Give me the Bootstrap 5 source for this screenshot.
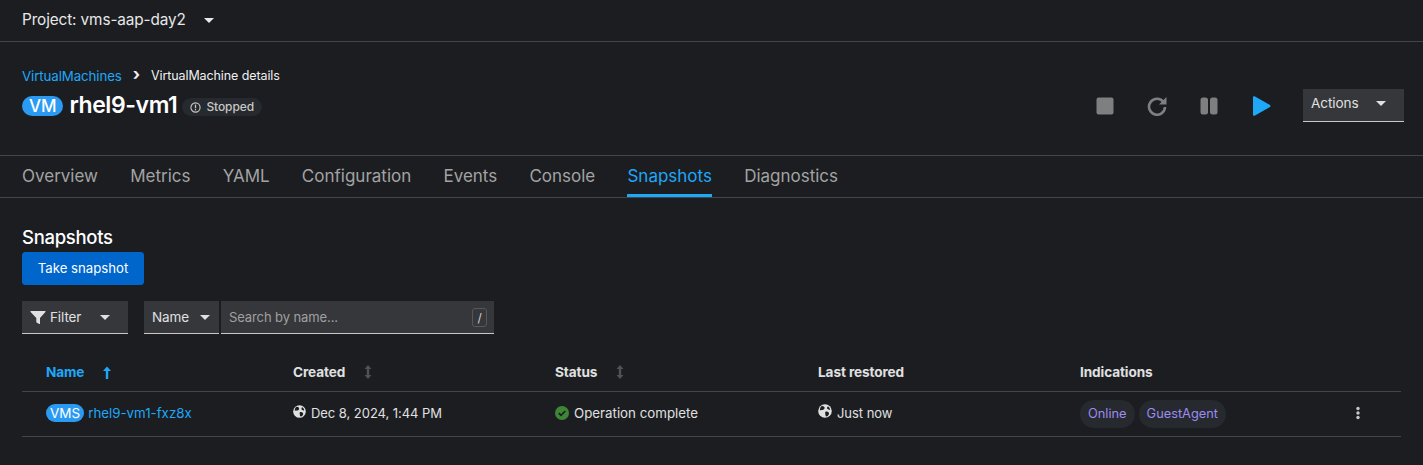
<!DOCTYPE html>
<html lang="en">
<head>
<meta charset="utf-8">
<title>rhel9-vm1 snapshots</title>
<link href="https://cdn.jsdelivr.net/npm/bootstrap@5.3.0/dist/css/bootstrap.min.css" rel="stylesheet">
<style>
html,body{height:465px;overflow:hidden}
body{background:#1b1d21;color:#e0e0e0;font-family:"Inter","Noto Sans",sans-serif;font-size:14px;letter-spacing:-.1px}
a{text-decoration:none}
.blue-t{color:#1fa7f8}
.top-strip{height:42px;border-bottom:1px solid #444548;padding:0 22px}
.proj{font-size:15.3px;color:#e8e8e8;gap:18px}
.caret{width:0;height:0;border-left:5px solid transparent;border-right:5px solid transparent;border-top:5px solid currentColor;display:inline-block}
.head-zone{height:113px;padding:25px 19px 0 22px}
.crumbs{font-size:12.5px;line-height:18px;gap:11px;color:#f0f0f0}
.crumbs a{font-size:13.3px}
.chev{font-size:17px;font-weight:700;line-height:1;margin-top:-3px}
.title-line{margin-top:6px;height:28px;gap:6px}
.vm-pill{background:#2b9af3;color:#fff;border-radius:12px;font-size:17px;font-weight:500;line-height:20px;padding:0 7px;margin-top:5px}
.vm-name{font-size:23px;font-weight:600;color:#fff;line-height:28px;letter-spacing:-.4px}
.stop-pill{background:#26292d;color:#c7c7c7;border-radius:12px;font-size:12px;font-weight:500;height:18px;padding:0 8px;gap:5px;margin-top:7px;margin-left:-1px}
.acts{margin-top:-12px;gap:32px}
.ic-btn{width:20px;height:20px;display:block;margin-top:2px}
.act-sel{background:#36373b;color:#e0e0e0;width:101px;height:33px;border-bottom:1px solid #c7c7c7;padding:0 18px 2px 8px;font-size:13.6px}
.tab-strip{height:43px;border-top:1px solid #444548;border-bottom:1px solid #444548;padding:0 22px;gap:32.2px}
.tab-item{font-size:17px;color:#a3a3a3;height:41px;line-height:41px;letter-spacing:0}
.tab-on{color:#1fa7f8;border-bottom:3px solid #1fa7f8}
.page-h{font-size:18.5px;font-weight:500;color:#fff;line-height:24px;margin:27px 0 0 22px;letter-spacing:-.3px}
.snap-btn{margin:3px 0 0 22px;background:#06c;border-color:#06c;color:#fff;font-size:13.2px;height:33px;width:122px;padding:0;border-radius:3px;display:block}
.tools{margin:16px 0 0 22px;height:33px;gap:16px}
.sel-box{background:#36373b;color:#e0e0e0;height:33px;border-bottom:1px solid #c7c7c7;font-size:13.5px}
.flt{width:106px;padding:0 18px 0 8px}
.flt-ic{margin-right:4px}
.nm{width:75px;padding:0 9px 0 8px}
.srch{width:273px;padding:1px 7px 0 8px;color:#a0a0a0;margin-left:2px;font-size:13px}
.kbd-key{width:15px;height:19px;border:1px solid #55575b;border-radius:3px;color:#d0d0d0;font-size:12px;line-height:17px;text-align:center}
.snap-table{margin:20px 22px 0 22px;width:1379px;table-layout:fixed;--bs-table-bg:transparent;--bs-table-color:#e0e0e0;--bs-table-border-color:#444548;margin-bottom:0}
.snap-table th,.snap-table td{padding:0 8px;vertical-align:middle;font-size:13.3px;letter-spacing:0}
.snap-table th{height:37px;font-weight:700;font-size:13.6px;letter-spacing:-.1px;color:#e0e0e0}
.snap-table td{height:45px}
.snap-table th.blue-t{color:#1fa7f8}
.snap-table .first-c{padding-left:24px}
.sort-ic{margin-left:15px;vertical-align:-2px}
.vms-pill{background:#2b9af3;color:#fff;border-radius:10px;font-size:13.5px;line-height:18px;padding:0 4px;display:inline-block;margin-right:4px}
.cell-ic{margin-right:5px;vertical-align:0}
.date-txt{font-size:13px;letter-spacing:-.05px}
.snap-table td .lab-pill{background:#26292d;color:#9c8cf0;border-radius:14px;height:28px;line-height:28px;padding:0 8px;display:inline-block;margin-right:4px;font-size:12.8px}
.kebab-c{padding-right:41px!important}
.kebab-c svg{display:inline-block;vertical-align:-2px}
</style>
</head>
<body>
<div class="top-strip d-flex align-items-center">
  <div class="proj d-flex align-items-center"><span>Project: vms-aap-day2</span><span class="caret"></span></div>
</div>
<div class="head-zone d-flex justify-content-between align-items-center">
  <div class="align-self-start">
    <div class="crumbs d-flex align-items-center">
      <a class="blue-t" href="#">VirtualMachines</a><span class="chev">›</span><span>VirtualMachine details</span>
    </div>
    <div class="title-line d-flex align-items-start">
      <span class="vm-pill">VM</span>
      <span class="vm-name">rhel9-vm1</span>
      <span class="stop-pill d-inline-flex align-items-center">
        <svg width="11" height="11" viewBox="0 0 12 12" fill="none"><circle cx="6" cy="6" r="5" stroke="#c7c7c7" stroke-width="1.2"/><rect x="5.3" y="2.8" width="1.4" height="4" fill="#c7c7c7"/><rect x="5.3" y="7.7" width="1.4" height="1.4" fill="#c7c7c7"/></svg>
        <span>Stopped</span>
      </span>
    </div>
  </div>
  <div class="acts d-flex align-items-center">
    <svg class="ic-btn" viewBox="0 0 20 20"><rect x="1.5" y="1.5" width="17" height="17" rx="2" fill="#7e7f81"/></svg>
    <svg class="ic-btn" viewBox="0 0 20 20" fill="none"><path d="M16.6 6.2A8 8 0 1 0 18 11" stroke="#7e7f81" stroke-width="2.6"/><path d="M19.5 1v7.500H12z" fill="#7e7f81"/></svg>
    <svg class="ic-btn" viewBox="0 0 20 20"><rect x="1.5" y="1.5" width="7.500" height="17" rx="2.500" fill="#7e7f81"/><rect x="11" y="1.5" width="7.500" height="17" rx="2.500" fill="#7e7f81"/></svg>
    <svg class="ic-btn" viewBox="0 0 20 20"><path d="M2 1.2c0-.9.9-1.300 1.600-.9L19 9.100c.7.4.7 1.400 0 1.800L3.600 19.700c-.7.4-1.600 0-1.600-.9z" fill="#1fa7f8"/></svg>
    <div class="act-sel d-flex align-items-center justify-content-between"><span>Actions</span><span class="caret"></span></div>
  </div>
</div>
<nav class="tab-strip d-flex">
  <a class="tab-item" href="#">Overview</a>
  <a class="tab-item" href="#">Metrics</a>
  <a class="tab-item" href="#">YAML</a>
  <a class="tab-item" href="#">Configuration</a>
  <a class="tab-item" href="#">Events</a>
  <a class="tab-item" href="#">Console</a>
  <a class="tab-item tab-on" href="#">Snapshots</a>
  <a class="tab-item" href="#">Diagnostics</a>
</nav>
<h1 class="page-h">Snapshots</h1>
<button class="btn snap-btn" type="button">Take snapshot</button>
<div class="tools d-flex">
  <div class="sel-box flt d-flex align-items-center">
    <svg class="flt-ic" width="16" height="16" viewBox="0 0 16 16"><path d="M1 2h14c.5 0 .7.500.4.900L10 9v5.500c0 .5-.5.700-.9.500l-2.500-1.500c-.2-.1-.3-.3-.3-.5V9L.6 2.900C.3 2.500.5 2 1 2z" fill="#e0e0e0"/></svg>
    <span>Filter</span><span class="caret ms-auto"></span>
  </div>
  <div class="d-flex">
    <div class="sel-box nm d-flex align-items-center justify-content-between"><span>Name</span><span class="caret"></span></div>
    <div class="sel-box srch d-flex align-items-center justify-content-between"><span>Search by name...</span><span class="kbd-key">/</span></div>
  </div>
</div>
<table class="table snap-table">
  <colgroup><col style="width:263px"><col style="width:262px"><col style="width:263px"><col style="width:262px"><col style="width:263px"><col></colgroup>
  <thead>
    <tr>
      <th class="first-c blue-t">Name <svg class="sort-ic" width="10" height="13" viewBox="0 0 10 13"><path d="M5 .5 9 5H6.200v8H3.800V5H1z" fill="#1fa7f8"/></svg></th>
      <th>Created <svg class="sort-ic" width="10" height="14" viewBox="0 0 10 14"><path d="M5 0 8.500 4H6.200v6h2.300L5 14 1.500 10h2.300V4H1.500z" fill="#4f5155"/></svg></th>
      <th>Status <svg class="sort-ic" width="10" height="14" viewBox="0 0 10 14"><path d="M5 0 8.500 4H6.200v6h2.300L5 14 1.500 10h2.300V4H1.500z" fill="#4f5155"/></svg></th>
      <th>Last restored</th>
      <th>Indications</th>
      <th></th>
    </tr>
  </thead>
  <tbody>
    <tr>
      <td class="first-c"><span class="vms-pill">VMS</span><a class="blue-t" href="#">rhel9-vm1-fxz8x</a></td>
      <td><svg class="cell-ic" width="13" height="13" viewBox="0 0 14 14"><circle cx="7" cy="7" r="6.800" fill="#e0e0e0"/><path d="M4 2c2 0 3 1 2.500 2.500S4.500 6 3.500 6 1.500 7 2 5s1-3 2-3zM8 7.500c1.500 0 3 .5 3 2s-1.500 3-2.500 3-1-1.500-1.200-2.500S7 7.500 8 7.500zM10 2.500c1 .5 2 2 2 3s-1.500 0-2.500-.5 0-3 .5-2.500z" fill="#1b1d21"/></svg><span class="date-txt">Dec 8, 2024, 1:44 PM</span></td>
      <td><svg class="cell-ic" width="14" height="14" viewBox="0 0 14 14" style="vertical-align:-2px"><circle cx="7" cy="7" r="7" fill="#3e8635"/><path d="M3.800 7.200 6 9.400 10.300 5" fill="none" stroke="#1b1d21" stroke-width="1.700"/></svg>Operation complete</td>
      <td><svg class="cell-ic" width="14" height="14" viewBox="0 0 14 14"><circle cx="7" cy="7" r="6.800" fill="#e0e0e0"/><path d="M4 2c2 0 3 1 2.500 2.500S4.500 6 3.500 6 1.500 7 2 5s1-3 2-3zM8 7.500c1.500 0 3 .5 3 2s-1.500 3-2.500 3-1-1.500-1.200-2.500S7 7.500 8 7.500zM10 2.500c1 .5 2 2 2 3s-1.500 0-2.500-.5 0-3 .5-2.500z" fill="#1b1d21"/></svg><span class="date-txt">Just now</span></td>
      <td><span class="lab-pill">Online</span><span class="lab-pill">GuestAgent</span></td>
      <td class="text-end kebab-c"><svg width="4" height="14" viewBox="0 0 4 14"><circle cx="2" cy="2.500" r="1.700" fill="#c7c7c7"/><circle cx="2" cy="7" r="1.700" fill="#c7c7c7"/><circle cx="2" cy="11.500" r="1.700" fill="#c7c7c7"/></svg></td>
    </tr>
  </tbody>
</table>
<script src="https://cdn.jsdelivr.net/npm/bootstrap@5.3.0/dist/js/bootstrap.bundle.min.js"></script>
</body>
</html>
